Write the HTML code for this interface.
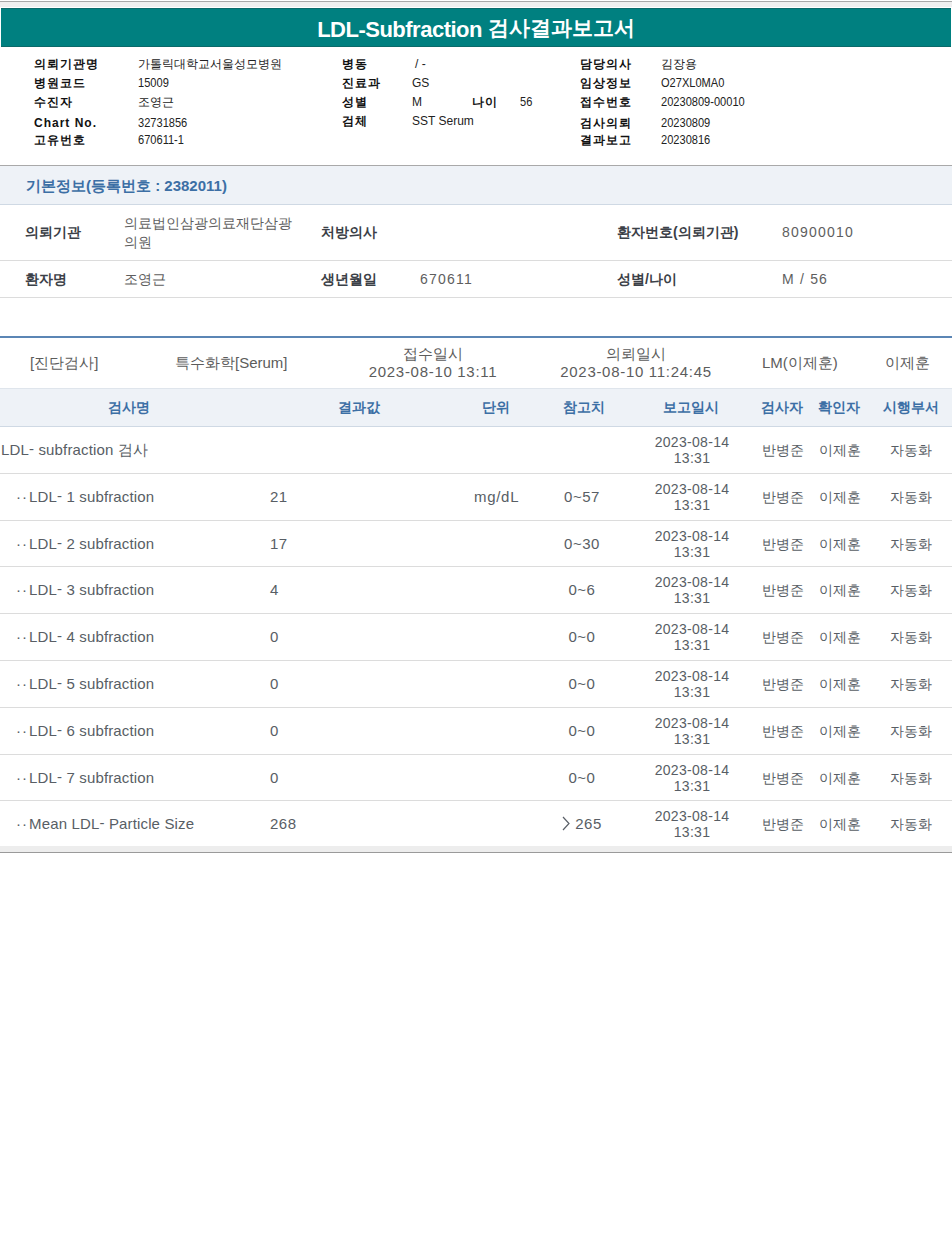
<!DOCTYPE html>
<html><head><meta charset="utf-8">
<style>
html,body{margin:0;padding:0;background:#fff;}
body{width:952px;height:1240px;position:relative;overflow:hidden;font-family:"Liberation Sans",sans-serif;}
.a{position:absolute;white-space:nowrap;}
#topline{position:absolute;left:0;top:1px;width:952px;height:1px;background:#a8a8a8;}
#topband{position:absolute;left:0;top:2px;width:952px;height:5px;background:#efefef;}
#title{position:absolute;left:1px;top:8px;width:950px;height:39px;background:#008080;color:#fff;font-weight:bold;font-size:21px;line-height:39px;text-align:center;box-shadow:inset 0 1px 0 #0b6a6a, inset 0 -1px 0 #0b6a6a;}
.hl{position:absolute;font-size:12px;font-weight:bold;color:#111;white-space:nowrap;line-height:14px;letter-spacing:1px;}
.hv{position:absolute;font-size:12px;color:#222;white-space:nowrap;line-height:14px;}
#hdrline{position:absolute;left:0;top:165px;width:952px;height:1px;background:#a9a9a9;}
#basic{position:absolute;left:0;top:166px;width:952px;height:38px;background:#eef2f7;border-bottom:1px solid #cfd9e4;}
#basic span{position:absolute;left:26px;top:11px;font-size:15px;font-weight:bold;color:#3c6fa5;}
.sep{position:absolute;left:0;width:952px;height:1px;background:#dcdcdc;}
.il{position:absolute;font-size:14px;font-weight:bold;color:#3b4047;white-space:nowrap;line-height:18px;}
.iv{position:absolute;font-size:14px;color:#5e5e5e;white-space:nowrap;line-height:18px;}
#blue{position:absolute;left:0;top:336px;width:952px;height:2px;background:#5b86b5;}
.t{position:absolute;font-size:15px;color:#5c5c5c;white-space:nowrap;line-height:18px;}
#thbg{position:absolute;left:0;top:388px;width:952px;height:37px;background:#eef2f7;border-top:1px solid #dfe5ec;border-bottom:1px solid #cfd9e4;}
.th{position:absolute;font-size:14.3px;font-weight:bold;color:#3c6fa5;white-space:nowrap;top:398px;line-height:18px;width:100px;text-align:center;}
.c{text-align:center;}
.dt{position:absolute;font-size:14px;color:#555;white-space:nowrap;text-align:center;line-height:17px;}
.row{position:absolute;left:0;width:952px;height:46px;font-size:15px;color:#585e65;line-height:18px;}
.row>div{position:absolute;white-space:nowrap;}
.nm{top:14px;}
.vl{left:270px;top:14px;letter-spacing:.5px;}
.un{left:474px;top:14px;letter-spacing:.7px;}
.rf{left:540px;width:84px;text-align:center;top:14px;letter-spacing:.5px;}
.rf{position:absolute;}
.dtm{left:640px;width:104px;text-align:center;top:7px;font-size:14px;line-height:16px;letter-spacing:.3px;}
.p1{left:762px;top:14px;font-size:14px;}
.p2{left:819px;top:14px;font-size:14px;}
.p3{left:890px;top:14px;font-size:14px;}
.num{display:inline-block;font-size:13.5px;transform:scaleX(.82);transform-origin:0 0;position:relative;top:0px;}
.tl{font-size:22px;letter-spacing:-0.5px;position:relative;top:2px;}
.hy{position:relative;top:-1px;}
.ls2{letter-spacing:1.2px;}
.ls{letter-spacing:.7px;}
.dd{letter-spacing:1px;margin-right:1px;}
.nm{letter-spacing:0.15px;}
.gt{display:inline-block;vertical-align:-2px;margin-right:5px;}
#bottomband{position:absolute;left:0;top:846px;width:952px;height:6px;background:#ededed;}
#bottomline{position:absolute;left:0;top:852px;width:952px;height:1px;background:#9a9a9a;}
</style></head><body>
<div id="topline"></div><div id="topband"></div>
<div id="title"><span class="tl">LDL-Subfraction</span> 검사결과보고서</div>

<div class="hl" style="left:34px;top:57px">의뢰기관명</div>
<div class="hl" style="left:34px;top:76px">병원코드</div>
<div class="hl" style="left:34px;top:95px">수진자</div>
<div class="hl" style="left:34px;top:116px">Chart No.</div>
<div class="hl" style="left:34px;top:133px">고유번호</div>
<div class="hv" style="left:138px;top:57px">가톨릭대학교서울성모병원</div>
<div class="hv" style="left:138px;top:76px"><span class="num">15009</span></div>
<div class="hv" style="left:138px;top:95px">조영근</div>
<div class="hv" style="left:138px;top:116px"><span class="num">32731856</span></div>
<div class="hv" style="left:138px;top:133px"><span class="num">670611-1</span></div>

<div class="hl" style="left:342px;top:57px">병동</div>
<div class="hl" style="left:342px;top:76px">진료과</div>
<div class="hl" style="left:342px;top:95px">성별</div>
<div class="hl" style="left:342px;top:114px">검체</div>
<div class="hv" style="left:415px;top:57px">/ -</div>
<div class="hv" style="left:412px;top:76px">GS</div>
<div class="hv" style="left:412px;top:95px">M</div>
<div class="hl" style="left:472px;top:95px">나이</div>
<div class="hv" style="left:520px;top:95px"><span class="num">56</span></div>
<div class="hv" style="left:412px;top:114px">SST Serum</div>

<div class="hl" style="left:580px;top:57px">담당의사</div>
<div class="hl" style="left:580px;top:76px">임상정보</div>
<div class="hl" style="left:580px;top:95px">접수번호</div>
<div class="hl" style="left:580px;top:116px">검사의뢰</div>
<div class="hl" style="left:580px;top:133px">결과보고</div>
<div class="hv" style="left:661px;top:57px">김장용</div>
<div class="hv" style="left:661px;top:76px"><span class="num">O27XL0MA0</span></div>
<div class="hv" style="left:661px;top:95px"><span class="num">20230809-00010</span></div>
<div class="hv" style="left:661px;top:116px"><span class="num">20230809</span></div>
<div class="hv" style="left:661px;top:133px"><span class="num">20230816</span></div>

<div id="hdrline"></div>
<div id="basic"><span>기본정보(등록번호 : 2382011)</span></div>

<div class="il" style="left:25px;top:223px">의뢰기관</div>
<div class="iv" style="left:124px;top:214px">의료법인삼광의료재단삼광</div>
<div class="iv" style="left:124px;top:233px">의원</div>
<div class="il" style="left:321px;top:223px">처방의사</div>
<div class="il" style="left:617px;top:223px">환자번호(의뢰기관)</div>
<div class="iv" style="left:782px;top:223px"><span class="ls2">80900010</span></div>
<div class="sep" style="top:260px"></div>
<div class="il" style="left:25px;top:270px">환자명</div>
<div class="iv" style="left:124px;top:270px">조영근</div>
<div class="il" style="left:321px;top:270px">생년월일</div>
<div class="iv" style="left:420px;top:270px"><span class="ls2">670611</span></div>
<div class="il" style="left:617px;top:270px">성별/나이</div>
<div class="iv" style="left:782px;top:270px"><span class="ls2">M / 56</span></div>
<div class="sep" style="top:297px"></div>

<div id="blue"></div>
<div class="t" style="left:30px;top:354px">[진단검사]</div>
<div class="t" style="left:175px;top:354px">특수화학[Serum]</div>
<div class="t c" style="left:333px;width:200px;top:345px;line-height:18px">접수일시<br><span class="ls">2023-08-10 13:11</span></div>
<div class="t c" style="left:536px;width:200px;top:345px;line-height:18px">의뢰일시<br><span class="ls">2023-08-10 11:24:45</span></div>
<div class="t" style="left:762px;top:354px">LM(이제훈)</div>
<div class="t" style="left:885px;top:354px">이제훈</div>

<div id="thbg"></div>
<div class="th" style="left:79px">검사명</div>
<div class="th" style="left:308.5px">결과값</div>
<div class="th" style="left:445.5px">단위</div>
<div class="th" style="left:533.5px">참고치</div>
<div class="th" style="left:641px">보고일시</div>
<div class="th" style="left:731.5px">검사자</div>
<div class="th" style="left:789px">확인자</div>
<div class="th" style="left:860.5px">시행부서</div>

<div id="rows">
<div class="row" style="top:427px">
<div class="nm" style="left:1px">LDL<span class=hy>-</span> subfraction 검사</div>
<div class="dtm">2023-08-14<br>13:31</div>
<div class="p1">반병준</div><div class="p2">이제훈</div><div class="p3">자동화</div>
</div>
<div class="sep rs" style="top:473px"></div>
<div class="row" style="top:474px">
<div class="nm" style="left:16px"><span class=dd>··</span>LDL<span class=hy>-</span> 1 subfraction</div>
<div class="vl">21</div>
<div class="un">mg/dL</div>
<div class="rf">0~57</div>
<div class="dtm">2023-08-14<br>13:31</div>
<div class="p1">반병준</div><div class="p2">이제훈</div><div class="p3">자동화</div>
</div>
<div class="sep rs" style="top:520px"></div>
<div class="row" style="top:521px">
<div class="nm" style="left:16px"><span class=dd>··</span>LDL<span class=hy>-</span> 2 subfraction</div>
<div class="vl">17</div>
<div class="rf">0~30</div>
<div class="dtm">2023-08-14<br>13:31</div>
<div class="p1">반병준</div><div class="p2">이제훈</div><div class="p3">자동화</div>
</div>
<div class="sep rs" style="top:566px"></div>
<div class="row" style="top:567px">
<div class="nm" style="left:16px"><span class=dd>··</span>LDL<span class=hy>-</span> 3 subfraction</div>
<div class="vl">4</div>
<div class="rf">0~6</div>
<div class="dtm">2023-08-14<br>13:31</div>
<div class="p1">반병준</div><div class="p2">이제훈</div><div class="p3">자동화</div>
</div>
<div class="sep rs" style="top:613px"></div>
<div class="row" style="top:614px">
<div class="nm" style="left:16px"><span class=dd>··</span>LDL<span class=hy>-</span> 4 subfraction</div>
<div class="vl">0</div>
<div class="rf">0~0</div>
<div class="dtm">2023-08-14<br>13:31</div>
<div class="p1">반병준</div><div class="p2">이제훈</div><div class="p3">자동화</div>
</div>
<div class="sep rs" style="top:660px"></div>
<div class="row" style="top:661px">
<div class="nm" style="left:16px"><span class=dd>··</span>LDL<span class=hy>-</span> 5 subfraction</div>
<div class="vl">0</div>
<div class="rf">0~0</div>
<div class="dtm">2023-08-14<br>13:31</div>
<div class="p1">반병준</div><div class="p2">이제훈</div><div class="p3">자동화</div>
</div>
<div class="sep rs" style="top:707px"></div>
<div class="row" style="top:708px">
<div class="nm" style="left:16px"><span class=dd>··</span>LDL<span class=hy>-</span> 6 subfraction</div>
<div class="vl">0</div>
<div class="rf">0~0</div>
<div class="dtm">2023-08-14<br>13:31</div>
<div class="p1">반병준</div><div class="p2">이제훈</div><div class="p3">자동화</div>
</div>
<div class="sep rs" style="top:754px"></div>
<div class="row" style="top:755px">
<div class="nm" style="left:16px"><span class=dd>··</span>LDL<span class=hy>-</span> 7 subfraction</div>
<div class="vl">0</div>
<div class="rf">0~0</div>
<div class="dtm">2023-08-14<br>13:31</div>
<div class="p1">반병준</div><div class="p2">이제훈</div><div class="p3">자동화</div>
</div>
<div class="sep rs" style="top:800px"></div>
<div class="row" style="top:801px">
<div class="nm" style="left:16px"><span class=dd>··</span>Mean LDL<span class=hy>-</span> Particle Size</div>
<div class="vl">268</div>
<div class="rf"><svg class=gt width=8 height=15 viewBox='0 0 8 15'><polyline points='1,1 7,7.5 1,14' fill=none stroke=#5a6068 stroke-width=1.2 /></svg>265</div>
<div class="dtm">2023-08-14<br>13:31</div>
<div class="p1">반병준</div><div class="p2">이제훈</div><div class="p3">자동화</div>
</div>
</div><!--endrows-->
<div id="bottomband"></div><div id="bottomline"></div>
</body></html>
